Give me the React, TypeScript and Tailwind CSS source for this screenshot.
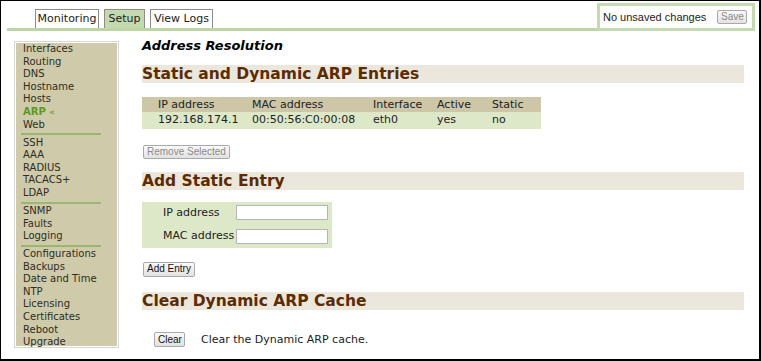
import React from 'react';

const menuGroups: string[][] = [
  ['Interfaces', 'Routing', 'DNS', 'Hostname', 'Hosts', 'ARP', 'Web'],
  ['SSH', 'AAA', 'RADIUS', 'TACACS+', 'LDAP'],
  ['SNMP', 'Faults', 'Logging'],
  ['Configurations', 'Backups', 'Date and Time', 'NTP', 'Licensing', 'Certificates', 'Reboot', 'Upgrade'],
];

const verdana = { fontFamily: '"DejaVu Sans", Verdana, sans-serif' };
const arial = { fontFamily: '"Liberation Sans", Arial, sans-serif' };

const SectionBand: React.FC<{ title: string }> = ({ title }) => (
  <div className="h-[18px] bg-[#ebe7dd] flex items-center">
    <h2 className="text-[15.5px] leading-[18px] font-bold text-[#5c2b00] whitespace-nowrap">{title}</h2>
  </div>
);

const OldButton: React.FC<{ label: string; disabled?: boolean; className?: string }> = ({ label, disabled, className }) => (
  <button
    style={arial}
    className={`h-[14px] px-[3px] text-[10px] leading-[12px] whitespace-nowrap border border-[#a9a9a9] rounded-[2px] bg-gradient-to-b from-[#fafafa] to-[#e2e2e2] ${
      disabled ? 'text-[#8a8a8a]' : 'text-[#111]'
    } ${className ?? ''}`}
  >
    {label}
  </button>
);

const App: React.FC = () => {
  return (
    <div style={verdana} className="w-[761px] h-[361px] bg-white border-t border-l border-r-2 border-b-2 border-black overflow-hidden text-[#222]">
      {/* Top bar with tabs */}
      <div className="flex items-end mt-[2px] ml-[6px] mr-[4px]">
        <div className="flex-1 flex items-end gap-[5px] pl-[28px] border-b-[3px] border-[#bdd5a5]">
          <div className="h-[19px] w-[64px] border border-b-0 border-[#8c8c8c] bg-white text-[11px] leading-[18px] text-center">Monitoring</div>
          <div className="h-[19px] w-[41px] border border-b-0 border-[#8c8c8c] bg-[#c4d9ad] text-[11px] leading-[18px] text-center">Setup</div>
          <div className="h-[19px] w-[63px] border border-b-0 border-[#8c8c8c] bg-white text-[11px] leading-[18px] text-center">View Logs</div>
        </div>
        <div className="w-[158px] h-[28px] border-[3px] border-[#c4dab0] bg-white flex items-center pl-[3px] pr-[5px]">
          <span style={arial} className="text-[11px] flex-1 whitespace-nowrap">No unsaved changes</span>
          <OldButton label="Save" disabled className="w-[30px] h-[14px]" />
        </div>
      </div>

      <div className="flex mt-[10px]">
        {/* Sidebar */}
        <div className="ml-[13px] w-[105px] h-[307px] border border-[#d6d6d6] p-[1px] bg-white">
          <div className="h-full bg-[#cfcaa9]">
            {menuGroups.map((group, gi) => (
              <div key={gi}>
                {gi > 0 && <div className="ml-[5px] w-[80px] h-[2px] mt-[2px] mb-[1.4px] bg-[#9ab872]" />}
                {group.map(item => (
                  <div key={item} className="pl-[7px] text-[10px] leading-[12.6px] text-[#2e2e24] whitespace-nowrap">
                    {item === 'ARP' ? (
                      <span className="font-bold text-[#5c9a19]">ARP <span className="font-normal text-[9px]">«</span></span>
                    ) : item}
                  </div>
                ))}
              </div>
            ))}
          </div>
        </div>

        {/* Main */}
        <div className="ml-[23px] mr-[15px] flex-1 flex flex-col">
          <h1 className="text-[13px] leading-[16px] font-bold italic text-black -mt-[3px]">Address Resolution</h1>

          <div className="mt-[11px]">
            <SectionBand title="Static and Dynamic ARP Entries" />
          </div>

          <table className="mt-[14px] w-[399px] text-[11px] border-collapse">
            <thead>
              <tr className="bg-[#cdc7a8] h-[15px]">
                <th className="text-left font-normal pl-[16px] leading-[15px]">IP address</th>
                <th className="text-left font-normal leading-[15px]">MAC address</th>
                <th className="text-left font-normal leading-[15px]">Interface</th>
                <th className="text-left font-normal leading-[15px]">Active</th>
                <th className="text-left font-normal leading-[15px]">Static</th>
              </tr>
            </thead>
            <tbody>
              <tr className="bg-[#dde8c9] h-[16px]">
                <td className="pl-[16px] w-[110px] leading-[16px]">192.168.174.1</td>
                <td className="w-[121px]">00:50:56:C0:00:08</td>
                <td className="w-[64px]">eth0</td>
                <td className="w-[55px]">yes</td>
                <td>no</td>
              </tr>
            </tbody>
          </table>

          <div className="mt-[16px] flex">
            <OldButton label="Remove Selected" disabled className="ml-[1px] text-[9.5px]" />
          </div>

          <div className="mt-[13px]">
            <SectionBand title="Add Static Entry" />
          </div>

          <div className="mt-[12px] w-[190px] h-[46px] bg-[#dde8c9] flex flex-col justify-center gap-[7px] text-[11px]">
            <div className="flex items-center">
              <span className="w-[94px] pl-[21px]">IP address</span>
              <input className="w-[92px] h-[15px] bg-white border border-[#b5b5b5]" />
            </div>
            <div className="flex items-center">
              <span className="w-[94px] pl-[21px]">MAC address</span>
              <input className="w-[92px] h-[15px] bg-white border border-[#b5b5b5]" />
            </div>
          </div>

          <div className="mt-[14px] flex">
            <OldButton label="Add Entry" className="ml-[1px] w-[52px] h-[15px]" />
          </div>

          <div className="mt-[15px]">
            <SectionBand title="Clear Dynamic ARP Cache" />
          </div>

          <div className="mt-[22px] flex items-center">
            <OldButton label="Clear" className="ml-[12px] w-[31px] h-[15px]" />
            <span className="ml-[16px] text-[11px]">Clear the Dynamic ARP cache.</span>
          </div>
        </div>
      </div>
    </div>
  );
};

export default App;
